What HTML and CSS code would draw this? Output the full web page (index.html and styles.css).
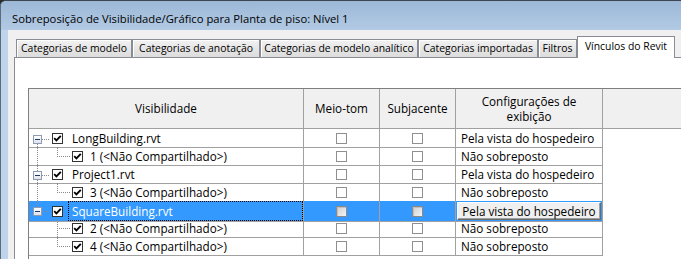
FILE: index.html
```html
<!DOCTYPE html>
<html>
<head>
<meta charset="utf-8">
<link rel="stylesheet" href="styles.css">
</head>
<body>
<div class="window">
  <div class="titlebar">Sobreposição de Visibilidade/Gráfico para Planta de piso: Nível 1</div>
  <div class="frame">
    <div class="client">
      <div class="tabs">
        <div class="tab t1">Categorias de modelo</div>
        <div class="tab t2">Categorias de anotação</div>
        <div class="tab t3">Categorias de modelo analítico</div>
        <div class="tab t4">Categorias importadas</div>
        <div class="tab t5">Filtros</div>
        <div class="tab active t6">Vínculos do Revit</div>
      </div>
      <div class="page">
        <div class="grid">
          <div class="row head">
            <div class="hc">Visibilidade</div>
            <div class="hc">Meio-tom</div>
            <div class="hc">Subjacente</div>
            <div class="hc">Configurações de<br>exibição</div>
            <div class="hc last"></div>
          </div>

          <div class="row">
            <div class="cell tree">
              <span class="gut root below"><span class="exp"></span></span>
              <span class="cb on"><svg viewBox="0 0 9 9"><polyline points="1.2,4.2 3.4,6.4 7.8,1.8"/></svg></span>
              <span class="lbl">LongBuilding.rvt</span>
            </div>
            <div class="cell c"><span class="cb"></span></div>
            <div class="cell c"><span class="cb"></span></div>
            <div class="cell txt">Pela vista do hospedeiro</div>
          </div>

          <div class="row">
            <div class="cell tree">
              <span class="gut pass"></span>
              <span class="gut2 lastchild"></span>
              <span class="cb on"><svg viewBox="0 0 9 9"><polyline points="1.2,4.2 3.4,6.4 7.8,1.8"/></svg></span>
              <span class="lbl">1 (&lt;Não Compartilhado&gt;)</span>
            </div>
            <div class="cell c"><span class="cb"></span></div>
            <div class="cell c"><span class="cb"></span></div>
            <div class="cell txt">Não sobreposto</div>
          </div>

          <div class="row">
            <div class="cell tree">
              <span class="gut root above below"><span class="exp"></span></span>
              <span class="cb on"><svg viewBox="0 0 9 9"><polyline points="1.2,4.2 3.4,6.4 7.8,1.8"/></svg></span>
              <span class="lbl">Project1.rvt</span>
            </div>
            <div class="cell c"><span class="cb"></span></div>
            <div class="cell c"><span class="cb"></span></div>
            <div class="cell txt">Pela vista do hospedeiro</div>
          </div>

          <div class="row">
            <div class="cell tree">
              <span class="gut pass"></span>
              <span class="gut2 lastchild"></span>
              <span class="cb on"><svg viewBox="0 0 9 9"><polyline points="1.2,4.2 3.4,6.4 7.8,1.8"/></svg></span>
              <span class="lbl">3 (&lt;Não Compartilhado&gt;)</span>
            </div>
            <div class="cell c"><span class="cb"></span></div>
            <div class="cell c"><span class="cb"></span></div>
            <div class="cell txt">Não sobreposto</div>
          </div>

          <div class="row sel">
            <div class="cell tree">
              <span class="gut root above"><span class="exp"></span></span>
              <span class="cb on"><svg viewBox="0 0 9 9"><polyline points="1.2,4.2 3.4,6.4 7.8,1.8"/></svg></span>
              <span class="lbl focus">SquareBuilding.rvt</span>
            </div>
            <div class="cell c"><span class="cb dis"></span></div>
            <div class="cell c"><span class="cb dis"></span></div>
            <div class="cell btncell"><span class="btn">Pela vista do hospedeiro</span></div>
          </div>

          <div class="row">
            <div class="cell tree">
              <span class="gut"></span>
              <span class="gut2"></span>
              <span class="cb on"><svg viewBox="0 0 9 9"><polyline points="1.2,4.2 3.4,6.4 7.8,1.8"/></svg></span>
              <span class="lbl">2 (&lt;Não Compartilhado&gt;)</span>
            </div>
            <div class="cell c"><span class="cb"></span></div>
            <div class="cell c"><span class="cb"></span></div>
            <div class="cell txt">Não sobreposto</div>
          </div>

          <div class="row">
            <div class="cell tree">
              <span class="gut"></span>
              <span class="gut2 lastchild"></span>
              <span class="cb on"><svg viewBox="0 0 9 9"><polyline points="1.2,4.2 3.4,6.4 7.8,1.8"/></svg></span>
              <span class="lbl">4 (&lt;Não Compartilhado&gt;)</span>
            </div>
            <div class="cell c"><span class="cb"></span></div>
            <div class="cell c"><span class="cb"></span></div>
            <div class="cell txt">Não sobreposto</div>
          </div>
        </div>
      </div>
    </div>
  </div>
</div>
</body>
</html>
```

FILE: styles.css
```css
* { box-sizing: border-box; }
html, body {
  margin: 0;
  height: 100%;
  overflow: hidden;
  background: #2b2b2b;
}
body {
  font-family: "Open Sans", "Noto Sans", sans-serif;
  font-size: 11.7px;
  color: #000;
}
.window {
  height: 259px;
  display: flex;
  flex-direction: column;
  border-top: 1px solid #3c4550;
  border-left: 1px solid #5d6c7d;
  border-top-left-radius: 6px;
  background: #bed4ea;
  overflow: hidden;
}
.titlebar {
  height: 29px;
  flex: none;
  padding-left: 11px;
  padding-top: 5px;
  display: flex;
  align-items: center;
  background: linear-gradient(#9cb8d7, #b2cae4);
  font-size: 11.25px;
}
.frame {
  flex: 1;
  display: flex;
  padding-left: 7px;
  min-height: 0;
}
.client {
  flex: 1;
  background: #f0f0f0;
  display: flex;
  flex-direction: column;
  padding: 6px 0 0 6px;
  min-height: 0;
}
.tabs {
  height: 22px;
  flex: none;
  display: flex;
  align-items: flex-end;
  padding-left: 2px;
  margin-bottom: -1px;
  position: relative;
  z-index: 1;
  font-size: 10.4px;
}
.tab {
  height: 18px;
  margin-bottom: 1px;
  border: 1px solid #898c95;
  border-bottom: none;
  background: linear-gradient(#f2f2f2, #e6e6e6 50%, #dcdcdc);
  box-shadow: inset 1px 1px 0 #fff;
  text-align: center;
  line-height: 16px;
  white-space: nowrap;
}
.t1 { width: 116px; }
.t2 { width: 128px; }
.t3 { width: 158px; }
.t4 { width: 120px; }
.t5 { width: 39px; }
.t6 { width: 98px; }
.tab.active {
  height: 22px;
  margin-bottom: 0;
  background: #fff;
  box-shadow: none;
  line-height: 18px;
}
.page {
  flex: 1;
  background: #fff;
  border-left: 1px solid #898c95;
  border-top: 1px solid #898c95;
  padding: 30px 0 0 13px;
  min-height: 0;
}
.grid {
  height: 100%;
  border-left: 1px solid #7f7f7f;
  border-top: 1px solid #7f7f7f;
  background: #fff;
}
.row {
  display: grid;
  grid-template-columns: 275px 76px 76px 147px;
  height: 18px;
}
.row.head {
  grid-template-columns: 275px 76px 76px 147px 1fr;
  height: 40px;
  background: #f0f0f0;
}
.hc {
  border-right: 1px solid #a0a0a0;
  border-bottom: 1px solid #a0a0a0;
  display: flex;
  align-items: center;
  justify-content: center;
  text-align: center;
  line-height: 15px;
}
.hc.last { border-right: none; }
.cell {
  border-right: 1px solid #a0a0a0;
  border-bottom: 1px solid #a0a0a0;
  display: flex;
  align-items: center;
  white-space: nowrap;
}
.cell.c { justify-content: center; }
.cell.txt { padding-left: 5px; }
.tree { position: relative; }

.sel .cell { background: #3399ff; }
.sel .lbl { color: #fff; }

/* tree gutters */
.gut {
  width: 19px;
  align-self: stretch;
  position: relative;
  flex: none;
}
.gut2 {
  width: 20px;
  align-self: stretch;
  position: relative;
  flex: none;
}
.exp {
  position: absolute;
  left: 4px;
  top: 6px;
  width: 9px;
  height: 9px;
  border: 1px solid #8e9bb0;
  background: linear-gradient(#ffffff, #dfe3ea);
}
.exp::after {
  content: "";
  position: absolute;
  left: 1px;
  top: 3px;
  width: 5px;
  height: 1px;
  background: #1b3a6b;
}
.gut.root::after {
  content: "";
  position: absolute;
  left: 13px;
  top: 10px;
  width: 7px;
  border-top: 1px dotted #8a8a8a;
}
.gut.above::before {
  content: "";
  position: absolute;
  left: 8px;
  top: 0;
  height: 6px;
  border-left: 1px dotted #8a8a8a;
}
.gut.below .exp::before {
  content: "";
  position: absolute;
  left: 3px;
  top: 8px;
  height: 11px;
  border-left: 1px dotted #8a8a8a;
}
.gut.pass::before {
  content: "";
  position: absolute;
  left: 8px;
  top: 0;
  bottom: 0;
  border-left: 1px dotted #8a8a8a;
}
.gut2::before {
  content: "";
  position: absolute;
  left: 9px;
  top: 0;
  bottom: 0;
  border-left: 1px dotted #8a8a8a;
}
.gut2.lastchild::before { bottom: 8px; }
.gut2::after {
  content: "";
  position: absolute;
  left: 9px;
  top: 9px;
  width: 13px;
  border-top: 1px dotted #8a8a8a;
}

/* checkboxes */
.cb {
  width: 11px;
  height: 11px;
  flex: none;
  border: 1px solid #8f8f8f;
  background: #fff;
  display: inline-flex;
  align-items: center;
  justify-content: center;
}
.tree .cb { margin-left: 4px; border-color: #333; }
.cb svg { width: 9px; height: 9px; }
.cb polyline {
  fill: none;
  stroke: #000;
  stroke-width: 1.9;
}
.cb.dis {
  border-color: #8a8a8a;
  background: linear-gradient(135deg, #cfcfcf, #f4f4f4);
  box-shadow: inset 1px 1px 0 #c0c0c0;
}
.gut2 + .cb { margin-left: 4px; }

.lbl {
  margin-left: 5px;
  align-self: stretch;
  display: flex;
  align-items: center;
  padding-left: 3px;
  border: 1px solid transparent;
  flex: 1;
}
.gut2 ~ .lbl { margin-left: 3px; }
.lbl.focus { border: 1px dotted #000; }

.btncell { padding: 1px; }
.btn {
  flex: 1;
  align-self: stretch;
  background: #f0f0f0;
  border: 1px solid;
  border-color: #fff #6a6a6a #6a6a6a #fff;
  box-shadow: inset -1px -1px 0 #a0a0a0;
  display: flex;
  align-items: center;
  justify-content: center;
}
```
